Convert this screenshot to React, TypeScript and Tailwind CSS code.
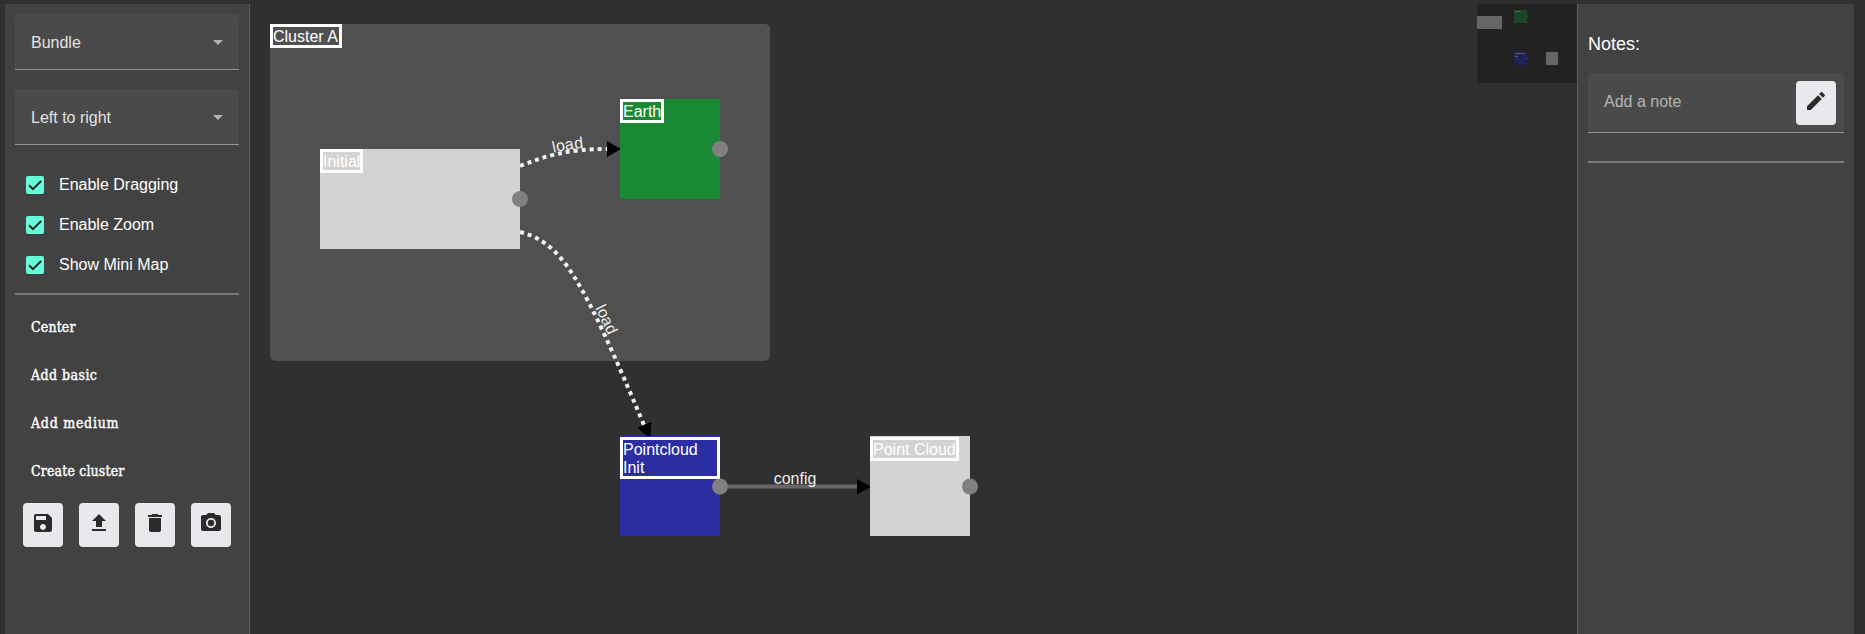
import React from "react";

const icons = {
  save: "M17 3H5c-1.11 0-2 .9-2 2v14c0 1.1.89 2 2 2h14c1.1 0 2-.9 2-2V7l-4-4zm-5 16c-1.66 0-3-1.34-3-3s1.34-3 3-3 3 1.34 3 3-1.34 3-3 3zm3-10H5V5h10v4z",
  upload: "M9 16h6v-6h4l-7-7-7 7h4zm-4 2h14v2H5z",
  trash: "M6 19c0 1.1.9 2 2 2h8c1.1 0 2-.9 2-2V7H6v12zM19 4h-3.5l-1-1h-5l-1 1H5v2h14V4z",
  camera:
    "M12 8.8a3.2 3.2 0 1 0 0 6.4 3.2 3.2 0 0 0 0-6.4zM9 2L7.17 4H4c-1.1 0-2 .9-2 2v12c0 1.1.9 2 2 2h16c1.1 0 2-.9 2-2V6c0-1.1-.9-2-2-2h-3.17L15 2H9zm3 15c-2.76 0-5-2.24-5-5s2.24-5 5-5 5 2.24 5 5-2.24 5-5 5z",
  edit: "M3 17.25V21h3.75L17.81 9.94l-3.75-3.75L3 17.25zM20.71 7.04c.39-.39.39-1.02 0-1.41l-2.34-2.34c-.39-.39-1.02-.39-1.41 0l-1.83 1.83 3.75 3.75 1.83-1.83z",
};

function IconButton({ icon, label }: { icon: keyof typeof icons; label: string }) {
  return (
    <button aria-label={label} className="flex h-11 w-10 shrink-0 items-start justify-center rounded bg-[#e9e9ed] pt-2">
      <svg viewBox="0 0 24 24" className="size-6 fill-[#2b2b2b]">
        <path d={icons[icon]} fillRule={icon === "camera" ? "evenodd" : "nonzero"} />
      </svg>
    </button>
  );
}

function Select({ value }: { value: string }) {
  return (
    <div className="flex h-14 items-center justify-between rounded-t border-b border-[#949494] bg-[#4a4a4a] px-4 text-[#e3e3e3]">
      <span className="pt-0.5">{value}</span>
      <svg viewBox="0 0 10 5" className="mt-px h-[5px] w-[10px] fill-[#b3b3b3]">
        <path d="M0 0h10L5 5z" />
      </svg>
    </div>
  );
}

function Check({ label }: { label: string }) {
  return (
    <label className="flex h-10 items-center gap-[15px] pl-[11px]">
      <span className="flex size-[18px] items-center justify-center rounded-xs bg-[#64ffda]">
        <svg viewBox="0 0 18 18" className="size-[18px] fill-none stroke-[#1c1c1c]" strokeWidth="2">
          <path d="M3 9.2l4 4 8.3-8.3" />
        </svg>
      </span>
      <span>{label}</span>
    </label>
  );
}

function Node({ label, box, tag }: { label: string; box: string; tag: string }) {
  return (
    <div className={`absolute flex items-start ${box}`}>
      <span className={`border-[3px] border-white pt-px leading-[18px] ${tag}`}>
        <span className="-mb-px block">{label}</span>
      </span>
    </div>
  );
}

function Graph() {
  return (
    <main className="relative min-w-0 flex-1">
      <Node
        label="Cluster A"
        box="left-[20px] top-[20px] h-[337px] w-[500px] rounded-[5px] bg-[#505050]"
        tag="w-[72px] whitespace-nowrap"
      />
      <svg className="absolute inset-0 size-full" fill="none">
        <g transform="translate(-250 -4)">
          <path id="edge-a" d="M520 166C547 155 570 149 607 149" stroke="#f2f2f2" strokeWidth="4" strokeDasharray="4 4" />
          <path
            id="edge-b"
            d="M520 232C545 238 560 254 575 278C593.5 308 614 354 644 425"
            stroke="#f2f2f2"
            strokeWidth="4"
            strokeDasharray="4 4"
          />
          <path d="M720 486.5H858" stroke="#666" strokeWidth="4" />
          <path d="M607 141l14 8-14 8zM637.3 427.7l14-5.7-.6 14h-3.7zM857 479l14 7.7-14 7.7z" fill="#000" />
          <g fill="#ededed" fontSize="16" textAnchor="middle">
            <text dy="-2">
              <textPath href="#edge-a" startOffset="51">load</textPath>
            </text>
            <text dy="-3">
              <textPath href="#edge-b" startOffset="125">load</textPath>
            </text>
            <text x="795" y="484">config</text>
          </g>
        </g>
      </svg>
      <Node label="Initial" box="left-[70px] top-[145px] h-[100px] w-[200px] bg-[#d3d3d3]" tag="w-[43px]" />
      <Node label="Earth" box="left-[370px] top-[95px] h-[100px] w-[100px] bg-[#198a33]" tag="w-[44px]" />
      <Node label="Pointcloud Init" box="left-[370px] top-[432px] h-[100px] w-[100px] bg-[#2b2da3] pt-px" tag="w-full" />
      <Node
        label="Point Cloud"
        box="left-[620px] top-[432px] h-[100px] w-[100px] bg-[#d3d3d3] pt-px"
        tag="w-[89px] whitespace-nowrap"
      />
      <svg className="absolute inset-0 size-full" fill="#808080">
        <circle cx="270" cy="195" r="8" />
        <circle cx="470" cy="145" r="8" />
        <circle cx="470" cy="482.5" r="8" />
        <circle cx="720" cy="482.5" r="8" />
      </svg>
      <svg className="absolute top-0 right-0 h-[79px] w-[100px] bg-[#222]">
        <path d="M0 12h25v13H0zM69 48h12v13H69z" fill="#666" />
        <path d="M37 6h13v13H37z" fill="#1b4724" />
        <path d="M37 48h13v13H37z" fill="#222354" />
        <path d="M38 7.5h5M38 49.5h10M38 52.5h3" stroke="#6d7078" strokeOpacity="0.7" />
        <g fill="#444">
          <circle cx="25" cy="19" r="1" />
          <circle cx="50.5" cy="12.5" r="1" />
          <circle cx="50.5" cy="54.5" r="1" />
          <circle cx="81.5" cy="54.5" r="1" />
        </g>
      </svg>
    </main>
  );
}

export default function App() {
  return (
    <div className="flex h-[634px] w-full overflow-hidden bg-[#303030] pt-1 pr-[11px] pl-[5px] font-['Liberation_Sans',Arial,sans-serif] text-base text-white">
      <aside className="flex w-[245px] shrink-0 flex-col border-r border-[#5e5e5e] bg-[#424242] px-[10px] pt-[10px]">
        <div className="flex flex-col gap-[19px]">
          <Select value="Bundle" />
          <Select value="Left to right" />
        </div>
        <div className="mt-5">
          <Check label="Enable Dragging" />
          <Check label="Enable Zoom" />
          <Check label="Show Mini Map" />
        </div>
        <div className="mt-2 h-0.5 bg-[#797979]" />
        <div className="mt-2 flex flex-col items-start pl-4 font-['DejaVu_Serif_Condensed','DejaVu_Serif',serif] text-[14px] [-webkit-text-stroke:0.4px_white]">
          <button className="h-12 tracking-[0.15px]">Center</button>
          <button className="h-12 tracking-[0.45px]">Add basic</button>
          <button className="h-12 tracking-[0.75px]">Add medium</button>
          <button className="h-12 tracking-[0.15px]">Create cluster</button>
        </div>
        <div className="mt-2 flex gap-4 pl-2">
          <IconButton icon="save" label="Save" />
          <IconButton icon="upload" label="Upload" />
          <IconButton icon="trash" label="Delete" />
          <IconButton icon="camera" label="Screenshot" />
        </div>
      </aside>
      <Graph />
      <aside className="w-[277px] shrink-0 border-l border-[#5e5e5e] bg-[#424242] px-[10px]">
        <h2 className="mt-[28px] text-[18px] leading-6">Notes:</h2>
        <div className="mt-[17px] flex h-[60px] items-center justify-between rounded-t border-b border-[#949494] bg-[#4a4a4a] pr-2 pl-4">
          <span className="-mt-0.5 text-[#b5b5b5]">Add a note</span>
          <IconButton icon="edit" label="Edit" />
        </div>
        <div className="mt-[28px] h-0.5 bg-[#797979]" />
      </aside>
    </div>
  );
}
